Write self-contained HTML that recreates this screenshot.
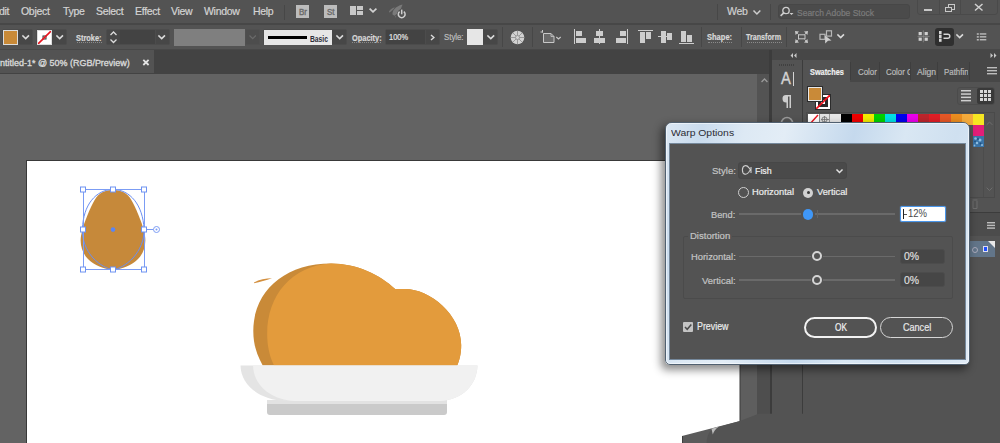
<!DOCTYPE html>
<html><head><meta charset="utf-8">
<style>
*{margin:0;padding:0;box-sizing:border-box}
html,body{width:1000px;height:443px;overflow:hidden;background:#535353;font-family:"Liberation Sans",sans-serif}
.a{position:absolute}
.t{position:absolute;white-space:pre;line-height:1;-webkit-text-stroke:0.2px currentColor}
.menu{color:#d4d4d4;font-size:10.5px;letter-spacing:-0.3px;top:6px}
.cb{color:#d6d6d6;font-size:9.5px;font-weight:700;letter-spacing:-0.4px}
.box{position:absolute;background:#474747;border:1px solid #4c4c4c;border-radius:2px}
.chev{position:absolute;width:6px;height:6px;border-right:1.5px solid #d8d8d8;border-bottom:1.5px solid #d8d8d8;transform:rotate(45deg)}
.dl{position:absolute;white-space:pre;line-height:1;font-size:10px;color:#c6c6c6;letter-spacing:-0.35px}
.dl2{position:absolute;white-space:pre;line-height:1;font-size:10px;color:#ececec;letter-spacing:-0.35px}
.sep{position:absolute;width:1px;background:#474747}
</style></head><body>
<!-- MENU BAR -->
<div class="a" style="left:0;top:0;width:1000px;height:23px;background:#535353"></div>
<div class="a" style="left:0;top:23px;width:1000px;height:2px;background:#474747"></div>
<div class="t menu" style="left:-1px">dit</div>
<div class="t menu" style="left:21px">Object</div>
<div class="t menu" style="left:63px">Type</div>
<div class="t menu" style="left:96px">Select</div>
<div class="t menu" style="left:135px">Effect</div>
<div class="t menu" style="left:171px">View</div>
<div class="t menu" style="left:204px">Window</div>
<div class="t menu" style="left:253px">Help</div>
<div class="sep" style="left:284px;top:5px;height:15px"></div>

<!-- Br St -->
<div class="a" style="left:296px;top:5px;width:13px;height:13px;background:#bcbcbc"></div>
<div class="t" style="left:298.6px;top:7.5px;font-size:9.2px;font-weight:400;color:#6a6a6a;-webkit-text-stroke:0.4px #6a6a6a;transform:scaleX(0.86);transform-origin:0 0">Br</div>
<div class="a" style="left:324px;top:5px;width:13px;height:13px;background:#bcbcbc"></div>
<div class="t" style="left:326.8px;top:7.5px;font-size:9.2px;font-weight:400;color:#6a6a6a;-webkit-text-stroke:0.4px #6a6a6a;transform:scaleX(0.86);transform-origin:0 0">St</div>
<!-- layout icon -->
<div class="a" style="left:350px;top:6px;width:6px;height:9px;background:#c8c8c8"></div>
<div class="a" style="left:357px;top:6px;width:6px;height:4px;background:#c8c8c8"></div>
<div class="a" style="left:357px;top:11px;width:6px;height:4px;background:#c8c8c8"></div>
<svg class="a" style="left:368px;top:7px" width="10" height="7" viewBox="0 0 10 7"><polyline points="2.2,2.2 5,4.8 7.8,2.2" fill="none" stroke="#d2d2d2" stroke-width="1.7" stroke-linecap="square"/></svg>
<!-- rocket/power icon -->
<svg class="a" style="left:385px;top:1px" width="25" height="20" viewBox="0 0 25 20">
<path d="M7.5 13.5 C7 10 10 5.5 17.5 3.5 C16 9 13 12.5 9.5 14.8 Z" fill="#7a7a7a"/>
<path d="M3.8 11 C5 8.5 7 6.8 9.8 6.2 C8.5 8.5 6.5 10.3 4.5 11.5 Z" fill="#767676"/>
<path d="M10.2 14.2 L11.3 15.8 L10.3 16.8 Z" fill="#707070"/>
<circle cx="16.7" cy="13.1" r="4.8" fill="#535353"/>
<path d="M14.6 10.6 A3.4 3.4 0 1 0 18.8 10.6" fill="none" stroke="#cfcfcf" stroke-width="1.5"/>
<line x1="16.7" y1="8.6" x2="16.7" y2="13.3" stroke="#cfcfcf" stroke-width="1.5"/>
</svg>
<!-- right menu -->
<div class="sep" style="left:717px;top:4px;height:16px"></div>
<div class="t menu" style="left:727px;color:#d0d0d0">Web</div>
<svg class="a" style="left:751.5px;top:8.5px" width="9.799999999999955" height="7.0" viewBox="0 0 9.799999999999955 7.0"><polyline points="2,2 4.899999999999977,5.0 7.7999999999999545,2" fill="none" stroke="#cdcdcd" stroke-width="1.5" stroke-linecap="square" stroke-linejoin="miter"/></svg>
<div class="sep" style="left:770px;top:4px;height:16px"></div>
<div class="a" style="left:778px;top:4px;width:132px;height:15px;background:#4b4b4b;border:1px solid #474747;border-radius:3px"></div>
<svg class="a" style="left:779px;top:5px" width="16" height="12" viewBox="0 0 16 12">
<circle cx="7" cy="5.5" r="3.2" fill="none" stroke="#cfcfcf" stroke-width="1.3"/>
<line x1="4.8" y1="7.8" x2="1.6" y2="10.8" stroke="#cfcfcf" stroke-width="1.6"/>
<path d="M10.5 8 L14.5 8 L12.5 10 Z" fill="#cfcfcf"/>
</svg>
<div class="t" id="search" style="left:797px;top:8.6px;font-size:9.08px;font-weight:400;color:#7c7c7c;transform:scaleX(0.935);transform-origin:0 0">Search Adobe Stock</div>
<div class="a" style="left:917px;top:-3px;width:81px;height:18px;border:1px solid #4a4a4a;border-radius:3px"></div>
<div class="a" style="left:939px;top:0;width:1px;height:14px;background:#4a4a4a"></div>
<div class="a" style="left:960px;top:0;width:1px;height:14px;background:#4a4a4a"></div>
<div class="a" style="left:924px;top:9px;width:8px;height:2px;background:#c8c8c8"></div>
<div class="a" style="left:947.5px;top:4px;width:7px;height:5.5px;border:1.3px solid #c8c8c8"></div>
<div class="a" style="left:945px;top:6.5px;width:6.5px;height:5.5px;border:1.3px solid #c8c8c8;background:#535353"></div>
<svg class="a" style="left:974px;top:3px" width="10" height="9" viewBox="0 0 10 9"><path d="M1 1 L8.5 7.5 M8.5 1 L1 7.5" stroke="#d0d0d0" stroke-width="1.5"/></svg>

<!-- CONTROL BAR -->
<div class="a" style="left:0;top:49px;width:1000px;height:1px;background:#484848"></div>
<div class="box" style="left:2px;top:29px;width:31px;height:16px"></div>
<div class="a" style="left:3px;top:30px;width:15px;height:15px;background:#c98a38;border:1px solid #dcdcdc"></div>
<svg class="a" style="left:20.8px;top:34.1px" width="9.399999999999999" height="6.600000000000001" viewBox="0 0 9.399999999999999 6.600000000000001"><polyline points="2,2 4.699999999999999,4.600000000000001 7.399999999999999,2" fill="none" stroke="#dadada" stroke-width="1.6" stroke-linecap="square" stroke-linejoin="miter"/></svg>
<div class="box" style="left:36px;top:29px;width:31px;height:16px"></div>
<div class="a" style="left:37px;top:30px;width:15px;height:15px;background:#fff;border:1px solid #dcdcdc;overflow:hidden">
 <svg width="15" height="15" style="position:absolute;left:-1px;top:-1px"><rect x="6" y="6" width="3" height="3" fill="none" stroke="#333" stroke-width="1"/><line x1="1" y1="14" x2="14" y2="1" stroke="#e8141e" stroke-width="1.6"/></svg>
</div>
<svg class="a" style="left:55.2px;top:34.1px" width="9.399999999999999" height="6.600000000000001" viewBox="0 0 9.399999999999999 6.600000000000001"><polyline points="2,2 4.699999999999999,4.600000000000001 7.399999999999999,2" fill="none" stroke="#dadada" stroke-width="1.6" stroke-linecap="square" stroke-linejoin="miter"/></svg>
<div class="t" id="stroke" style="left:76.3px;top:34.92px;font-size:8.24px;font-weight:700;color:#d8d8d8;transform:scaleX(0.901);transform-origin:0 0">Stroke:</div>
<div class="a" style="left:77px;top:42px;width:25px;border-top:1px dotted #8a8a8a"></div>
<div class="box" style="left:106px;top:29px;width:64px;height:16px"></div>
<div class="a" style="left:120px;top:30px;width:35px;height:14px;background:#434343"></div>
<div class="a" style="left:155px;top:30px;width:1px;height:14px;background:#4c4c4c"></div>
<svg class="a" style="left:109px;top:30px" width="9" height="15" viewBox="0 0 9 15"><path d="M1.5 5 L4.5 2 L7.5 5 M1.5 9.5 L4.5 12.5 L7.5 9.5" fill="none" stroke="#dcdcdc" stroke-width="1.3"/></svg>
<svg class="a" style="left:157.3px;top:33.9px" width="9.399999999999977" height="6.600000000000001" viewBox="0 0 9.399999999999977 6.600000000000001"><polyline points="2,2 4.699999999999989,4.600000000000001 7.399999999999977,2" fill="none" stroke="#dadada" stroke-width="1.6" stroke-linecap="square" stroke-linejoin="miter"/></svg>
<div class="a" style="left:174px;top:29px;width:71px;height:17px;background:#7f7f7f"></div>
<div class="box" style="left:245px;top:29px;width:15px;height:16px;background:#4d4d4d;border-color:#505050"></div>
<svg class="a" style="left:247.5px;top:33.9px" width="9.400000000000006" height="6.600000000000001" viewBox="0 0 9.400000000000006 6.600000000000001"><polyline points="2,2 4.700000000000003,4.600000000000001 7.400000000000006,2" fill="none" stroke="#6a6a6a" stroke-width="1.3" stroke-linecap="square" stroke-linejoin="miter"/></svg>
<div class="box" style="left:263px;top:29px;width:84px;height:16px"></div>
<div class="a" style="left:264px;top:30px;width:68px;height:15px;background:#e6e6e6"></div>
<div class="a" style="left:268px;top:36px;width:39px;height:3px;background:#000"></div>
<div class="t" id="basic" style="left:309.7px;top:34.77px;font-size:8.66px;font-weight:700;color:#2c2c38;-webkit-text-stroke:0;transform:scaleX(0.774);transform-origin:0 0">Basic</div>
<svg class="a" style="left:334.5px;top:34px" width="9.399999999999977" height="6.600000000000001" viewBox="0 0 9.399999999999977 6.600000000000001"><polyline points="2,2 4.699999999999989,4.600000000000001 7.399999999999977,2" fill="none" stroke="#dadada" stroke-width="1.6" stroke-linecap="square" stroke-linejoin="miter"/></svg>
<div class="t" id="opacity" style="left:352px;top:34.41px;font-size:8.38px;font-weight:700;color:#d8d8d8;transform:scaleX(0.885);transform-origin:0 0">Opacity:</div>
<div class="a" style="left:352px;top:42px;width:29px;border-top:1px dotted #8a8a8a"></div>
<div class="box" style="left:385px;top:29px;width:55px;height:16px"></div>
<div class="a" style="left:386px;top:30px;width:39px;height:14px;background:#434343"></div>
<div class="a" style="left:425px;top:30px;width:1px;height:14px;background:#4c4c4c"></div>
<div class="t" id="p100" style="left:388.5px;top:34.42px;font-size:8.24px;font-weight:400;color:#e4e4e4;transform:scaleX(0.902);transform-origin:0 0">100%</div>
<svg class="a" style="left:428.5px;top:32.8px" width="7" height="9" viewBox="0 0 7 9"><polyline points="2,2 4.9,4.5 2,7" fill="none" stroke="#dadada" stroke-width="1.4"/></svg>
<div class="t" id="style" style="left:443.9px;top:33.4px;font-size:8.38px;font-weight:400;color:#bdbdbd;transform:scaleX(0.933);transform-origin:0 0">Style:</div>
<div class="box" style="left:467px;top:29px;width:31px;height:16px"></div>
<div class="a" style="left:467px;top:29px;width:16px;height:16px;background:#e6e6e6"></div>
<svg class="a" style="left:485.7px;top:33.9px" width="9.600000000000023" height="6.600000000000001" viewBox="0 0 9.600000000000023 6.600000000000001"><polyline points="2,2 4.800000000000011,4.600000000000001 7.600000000000023,2" fill="none" stroke="#dadada" stroke-width="1.6" stroke-linecap="square" stroke-linejoin="miter"/></svg>
<div class="sep" style="left:502px;top:27px;height:20px"></div>
<svg class="a" style="left:510px;top:30px" width="15" height="15" viewBox="0 0 15 15">
<circle cx="7.5" cy="7.5" r="6.8" fill="#d2d2d2"/>
<g stroke="#8a8a8a" stroke-width="0.8" fill="none"><circle cx="7.5" cy="7.5" r="2"/><path d="M7.5 1 V5.5 M7.5 9.5 V14 M1 7.5 H5.5 M9.5 7.5 H14 M3 3 L6 6 M9 9 L12 12 M12 3 L9 6 M6 9 L3 12"/></g>
</svg>
<div class="sep" style="left:532px;top:27px;height:20px"></div>
<!-- artboard icon -->
<svg class="a" style="left:540px;top:29px" width="24" height="15" viewBox="0 0 24 15">
<path d="M3.5 4.5 H11 L14 7.5 V13.5 H3.5 Z" fill="#6a6a6a" stroke="#c8c8c8" stroke-width="1"/>
<path d="M11 4.5 V7.5 H14" fill="none" stroke="#c8c8c8" stroke-width="0.8"/>
<path d="M2.5 1 V3.5 M0.5 3 H3" stroke="#c8c8c8" stroke-width="1"/>
<polyline points="16.3,8 18.5,10 20.7,8" fill="none" stroke="#c8c8c8" stroke-width="1.2"/>
</svg>
<!-- align icons -->
<svg class="a" style="left:573px;top:29px" width="122" height="16" viewBox="0 0 122 16" shape-rendering="crispEdges">
<g fill="#cdcdcd">
<rect x="1" y="0" width="1" height="15"/><rect x="3" y="2" width="6" height="5"/><rect x="3" y="8.5" width="10" height="5"/>
<rect x="26" y="0" width="1" height="15"/><rect x="23" y="2" width="7" height="5"/><rect x="21" y="8.5" width="11" height="5"/>
<rect x="54" y="0" width="1" height="15"/><rect x="47" y="2" width="6" height="5"/><rect x="43" y="8.5" width="10" height="5"/>
<rect x="65" y="1" width="15" height="1"/><rect x="67" y="3" width="5" height="11"/><rect x="73" y="3" width="5" height="7"/>
<rect x="85" y="7" width="14" height="1"/><rect x="87.5" y="2" width="5" height="12"/><rect x="93.5" y="4" width="5" height="7"/>
<rect x="106" y="14" width="15" height="1"/><rect x="108" y="2" width="5" height="11"/><rect x="114" y="6" width="5" height="7"/>
</g></svg>
<div class="sep" style="left:701px;top:27px;height:20px"></div>
<div class="t" id="shape" style="left:707px;top:34.22px;font-size:8.24px;font-weight:700;color:#d8d8d8;transform:scaleX(0.913);transform-origin:0 0">Shape:</div>
<div class="a" style="left:708px;top:42px;width:24px;border-top:1px dotted #8a8a8a"></div>
<div class="sep" style="left:741px;top:27px;height:20px"></div>
<div class="t" id="transform" style="left:746.4px;top:34.22px;font-size:8.24px;font-weight:700;color:#d8d8d8;transform:scaleX(0.869);transform-origin:0 0">Transform</div>
<div class="a" style="left:747px;top:42px;width:35px;border-top:1px dotted #8a8a8a"></div>
<div class="sep" style="left:786px;top:27px;height:20px"></div>
<svg class="a" style="left:794px;top:30px" width="15" height="14" viewBox="0 0 15 14">
<rect x="4.5" y="4.8" width="6.5" height="4" fill="none" stroke="#c8c8c8" stroke-width="1"/>
<g fill="#c8c8c8"><path d="M1 1 L5 1.6 L1.6 5 Z"/><path d="M14 1 L10 1.6 L13.4 5 Z"/><path d="M1 13 L5 12.4 L1.6 9 Z"/><path d="M14 13 L10 12.4 L13.4 9 Z"/></g>
<path d="M3 3 L4.5 4.5 M12 3 L10.5 4.5 M3 11 L4.5 9.5 M12 11 L10.5 9.5" stroke="#c8c8c8" stroke-width="0.8"/>
</svg>
<svg class="a" style="left:818px;top:29px" width="18" height="16" viewBox="0 0 18 16">
<rect x="2" y="5.3" width="5" height="5" fill="none" stroke="#b8b8b8" stroke-width="1.2"/>
<rect x="8.5" y="1.8" width="5" height="5.3" fill="none" stroke="#b8b8b8" stroke-width="1.2"/>
<path d="M7 6.5 L13.5 11.5 L10 11.8 L7.2 14.5 Z" fill="#cdcdcd"/>
</svg>
<svg class="a" style="left:835.7px;top:33.3px" width="9.399999999999977" height="6.600000000000001" viewBox="0 0 9.399999999999977 6.600000000000001"><polyline points="2,2 4.699999999999989,4.600000000000001 7.399999999999977,2" fill="none" stroke="#dadada" stroke-width="1.6" stroke-linecap="square"/></svg>
<svg class="a" style="left:917px;top:30px" width="14" height="13" viewBox="917 30 14 13">
<path d="M917.6 36.4 H929.6 M923.3 30.4 V42.3" stroke="#8a8a8a" stroke-width="0.8"/>
<g fill="#d0d0d0"><rect x="918.6" y="32" width="3.2" height="3.2"/><rect x="924.6" y="32" width="3.2" height="3.2"/><rect x="918.6" y="37.6" width="3.2" height="3.2"/><rect x="924.6" y="37.6" width="3.2" height="3.2"/></g>
</svg>
<div class="a" style="left:935px;top:27.5px;width:19px;height:18.5px;background:#2f2f2f;border-radius:3px"></div>
<svg class="a" style="left:935px;top:27px" width="20" height="20" viewBox="935 27 20 20">
<g fill="#d6d6d6"><rect x="939" y="31" width="2.6" height="3.2"/><rect x="939" y="34.8" width="2.6" height="3.2"/><rect x="939" y="38.6" width="2.6" height="3.2"/></g>
<path d="M943.5 34.3 H947.8 A2 2 0 0 1 947.8 38.3 H943.5" fill="none" stroke="#d6d6d6" stroke-width="1.4"/>
</svg>
<svg class="a" style="left:954.5px;top:33.3px" width="9.4" height="6.6" viewBox="0 0 9.4 6.6"><polyline points="2,2 4.7,4.6 7.4,2" fill="none" stroke="#dadada" stroke-width="1.6" stroke-linecap="square"/></svg>
<svg class="a" style="left:976px;top:33px" width="11" height="8" viewBox="0 0 11 8">
<g fill="#c4c4c4"><rect x="0.8" y="0.3" width="2" height="1.4"/><rect x="0.8" y="3.2" width="2" height="1.4"/><rect x="0.8" y="6.1" width="2" height="1.4"/><rect x="3.8" y="0.3" width="6.5" height="1.3"/><rect x="3.8" y="3.2" width="6.5" height="1.3"/><rect x="3.8" y="6.1" width="6.5" height="1.3"/></g>
</svg>

<!-- TAB BAR -->
<div class="a" style="left:0;top:50px;width:770px;height:24px;background:#434343"></div>
<div class="a" style="left:0;top:50px;width:154px;height:23px;background:#535353"></div>
<div class="t" id="tab" style="left:0px;top:58.9px;font-size:8.8px;font-weight:400;color:#d8d8d8;-webkit-text-stroke:0.35px #d8d8d8;transform:scaleX(1.02);transform-origin:0 0">ntitled-1* @ 50% (RGB/Preview)</div>
<svg class="a" style="left:142px;top:59px" width="8" height="7" viewBox="0 0 8 7"><path d="M1.3 0.9 L6.6 6 M6.6 0.9 L1.3 6" stroke="#e4e4e4" stroke-width="1.8"/></svg>
<!-- CANVAS -->
<div class="a" style="left:0;top:74px;width:757px;height:369px;background:#636363"></div>
<div class="a" style="left:757px;top:74px;width:13px;height:369px;background:#535353"></div>
<svg class="a" style="left:759.5px;top:77px" width="9.0" height="6.5" viewBox="0 0 9.0 6.5"><polyline points="2,4.5 4.5,2 7.0,4.5" fill="none" stroke="#9a9a9a" stroke-width="1.3" stroke-linecap="square" stroke-linejoin="miter"/></svg>
<div class="a" style="left:26px;top:160px;width:714px;height:283px;background:#2e2e2e;opacity:.8"></div>
<div class="a" style="left:27px;top:161px;width:713px;height:282px;background:#fff"></div>
<!-- DOCK -->
<div class="a" style="left:769px;top:50px;width:3px;height:393px;background:#3c3c3c"></div>
<div class="a" style="left:772px;top:50px;width:228px;height:10px;background:#474747"></div>
<svg class="a" style="left:790px;top:53px" width="7" height="5" viewBox="0 0 7 5"><path d="M3 0 L0.5 2.5 L3 5 Z M6.5 0 L4 2.5 L6.5 5 Z" fill="#c8c8c8"/></svg>
<svg class="a" style="left:990px;top:53px" width="7" height="5" viewBox="0 0 7 5"><path d="M0.5 0 L3 2.5 L0.5 5 Z M4 0 L6.5 2.5 L4 5 Z" fill="#c8c8c8"/></svg>
<div class="a" style="left:772px;top:60px;width:30px;height:383px;background:#535353"></div>
<div class="a" style="left:779px;top:63.5px;width:15px;height:2px;background-image:repeating-linear-gradient(90deg,#404040 0 1.5px,transparent 1.5px 2px)"></div>
<div class="t" style="left:780.5px;top:71px;font-size:16px;color:#d4d4d4;font-weight:400;-webkit-text-stroke:0.4px #d4d4d4;transform:scaleX(0.92);transform-origin:0 0">A</div>
<div class="a" style="left:793px;top:72px;width:1px;height:14px;background:#d4d4d4"></div>
<svg class="a" style="left:781px;top:95px" width="11" height="14" viewBox="0 0 11 14"><path d="M5 0 H10 V13 H8.5 V1.5 H7 V13 H5.5 V7.5 A3.7 3.7 0 0 1 5 0 Z" fill="#cdcdcd"/></svg>
<svg class="a" style="left:779px;top:114px" width="16" height="9" viewBox="0 0 16 9"><path d="M2.5 9 A5.5 5.5 0 0 1 13.5 9" fill="none" stroke="#9a9a9a" stroke-width="1.6"/></svg>
<div class="a" style="left:802px;top:60px;width:1px;height:383px;background:#3c3c3c"></div>
<div class="a" style="left:803px;top:60px;width:197px;height:22px;background:#474747"></div>
<div class="a" style="left:803px;top:60px;width:47px;height:22px;background:#535353"></div>
<div class="t" id="swatches" style="left:810.4px;top:68.31px;font-size:8.38px;font-weight:700;color:#f0f0f0;transform:scaleX(0.874);transform-origin:0 0">Swatches</div>
<div class="a" style="left:879px;top:62px;width:1px;height:18px;background:#3e3e3e"></div>
<div class="a" style="left:850px;top:62px;width:1px;height:18px;background:#3e3e3e"></div>
<div class="a" style="left:910px;top:62px;width:1px;height:18px;background:#3e3e3e"></div>
<div class="a" style="left:937px;top:62px;width:1px;height:18px;background:#3e3e3e"></div>
<div class="a" style="left:969px;top:62px;width:1px;height:18px;background:#3e3e3e"></div>
<div class="t" id="color" style="left:858px;top:68.31px;font-size:8.38px;font-weight:400;color:#b9b9b9;transform:scaleX(0.941);transform-origin:0 0">Color</div>
<div class="a" style="left:886px;top:66px;width:24px;height:12px;overflow:hidden"><div class="t" style="left:0;top:2.4px;font-size:8.38px;color:#b9b9b9;transform:scaleX(0.94);transform-origin:0 0">Color Guide</div></div>
<div class="t" id="align" style="left:917px;top:68.31px;font-size:8.38px;font-weight:400;color:#b9b9b9;transform:scaleX(1.024);transform-origin:0 0">Align</div>
<div class="a" style="left:944px;top:66px;width:24px;height:12px;overflow:hidden"><div class="t" style="left:0;top:2.4px;font-size:8.38px;color:#b9b9b9;transform:scaleX(0.94);transform-origin:0 0">Pathfinder</div></div>
<svg class="a" style="left:987px;top:67px" width="10" height="8" viewBox="0 0 10 8"><g fill="#bdbdbd"><rect y="0" width="10" height="1.4"/><rect y="3" width="10" height="1.4"/><rect y="6" width="10" height="1.4"/></g></svg>
<div class="a" style="left:803px;top:82px;width:197px;height:361px;background:#535353"></div>
<!-- fill/stroke -->
<div class="a" style="left:815px;top:94px;width:16px;height:16px;background:#2c2c2c"></div>
<div class="a" style="left:816px;top:95px;width:14px;height:14px;background:#fff;overflow:hidden">
<svg width="14" height="14" style="position:absolute;left:0;top:0"><rect x="3.5" y="3.5" width="7" height="7" fill="none" stroke="#2a2a2a" stroke-width="3"/><line x1="0" y1="14" x2="14" y2="0" stroke="#f0141e" stroke-width="1.8"/></svg></div>
<div class="a" style="left:807px;top:86px;width:16px;height:16px;background:#2c2c2c"></div>
<div class="a" style="left:808px;top:87px;width:14px;height:14px;background:#c98a38;border:1px solid #e8e8e8"></div>
<!-- view buttons -->
<div class="a" style="left:957px;top:87px;width:38px;height:18px;border:1px solid #4b4b4b;border-radius:3px"></div>
<div class="a" style="left:977px;top:88px;width:17px;height:16px;background:#393939;border-radius:2px"></div>
<svg class="a" style="left:961px;top:90px" width="10" height="12" viewBox="0 0 10 12"><g fill="#cfcfcf"><rect y="0" width="10" height="1.5"/><rect y="3.3" width="10" height="1.5"/><rect y="6.6" width="10" height="1.5"/><rect y="9.9" width="10" height="1.5"/></g></svg>
<svg class="a" style="left:980px;top:90px" width="11" height="11" viewBox="0 0 11 11"><g fill="#d6d6d6"><rect x="0" y="0" width="3" height="3"/><rect x="4" y="0" width="3" height="3"/><rect x="8" y="0" width="3" height="3"/><rect x="0" y="4" width="3" height="3"/><rect x="4" y="4" width="3" height="3"/><rect x="8" y="4" width="3" height="3"/><rect x="0" y="8" width="3" height="3"/><rect x="4" y="8" width="3" height="3"/><rect x="8" y="8" width="3" height="3"/></g></svg>
<!-- swatch list box -->
<div class="a" style="left:806px;top:112px;width:189px;height:86px;border:1px solid #4a4a4a"></div>
<div class="a" style="left:983px;top:113px;width:1px;height:84px;background:#4c4c4c"></div>
<svg class="a" style="left:984.5px;top:120px" width="9.0" height="6.5" viewBox="0 0 9.0 6.5"><polyline points="2,4.5 4.5,2 7.0,4.5" fill="none" stroke="#6e6e6e" stroke-width="1" stroke-linecap="square" stroke-linejoin="miter"/></svg>
<svg class="a" style="left:984.5px;top:186px" width="9.0" height="6.5" viewBox="0 0 9.0 6.5"><polyline points="2,2 4.5,4.5 7.0,2" fill="none" stroke="#6e6e6e" stroke-width="1" stroke-linecap="square" stroke-linejoin="miter"/></svg>
<svg class="a" style="left:808px;top:114px" width="176" height="34" viewBox="0 0 176 34" shape-rendering="crispEdges">
<rect x="0" y="0" width="11" height="11" fill="#fff"/><line x1="1" y1="11" x2="10" y2="1" stroke="#e8141e" stroke-width="1.4" shape-rendering="auto"/>
<rect x="11" y="0" width="11" height="11" fill="#e2e2e2"/><circle cx="16.5" cy="5.5" r="2.6" fill="none" stroke="#6a6a6a" stroke-width="0.8" shape-rendering="auto"/><path d="M12.5 5.5 H20.5 M16.5 1.5 V9.5" stroke="#6a6a6a" stroke-width="0.7"/><rect x="11" y="0" width="0.6" height="11" fill="#8a8a8a"/><rect x="21.4" y="0" width="0.6" height="11" fill="#9a9a9a"/>
<rect x="22" y="0" width="11" height="11" fill="#e9e9e9"/><rect x="22" y="8" width="11" height="3" fill="#d8d8d8"/>
<rect x="33" y="0" width="11" height="11" fill="#000"/>
<rect x="44" y="0" width="11" height="11" fill="#f00000"/>
<rect x="55" y="0" width="11" height="11" fill="#f2ec00"/>
<rect x="66" y="0" width="11" height="11" fill="#00d200"/>
<rect x="77" y="0" width="11" height="11" fill="#00dfe6"/>
<rect x="88" y="0" width="11" height="11" fill="#0000ee"/>
<rect x="99" y="0" width="11" height="11" fill="#ea00ea"/>
<rect x="110" y="0" width="11" height="11" fill="#bd252c"/>
<rect x="121" y="0" width="11" height="11" fill="#e01e26"/>
<rect x="132" y="0" width="11" height="11" fill="#e65726"/>
<rect x="143" y="0" width="11" height="11" fill="#ec8d1f"/>
<rect x="154" y="0" width="11" height="11" fill="#f4aa3b"/>
<rect x="165" y="0" width="11" height="11" fill="#f6e622"/>
<rect x="165" y="11" width="11" height="11" fill="#e21e78"/>
<rect x="165" y="22" width="11" height="11" fill="#3a74a8"/>
<g fill="#8fbde0" shape-rendering="auto"><circle cx="167.5" cy="24.5" r="1.3"/><circle cx="172" cy="26" r="1.5"/><circle cx="169" cy="29" r="1.2"/><circle cx="174" cy="31" r="1.1"/><circle cx="166.5" cy="31.5" r="0.9"/></g><g fill="#1f4f80" shape-rendering="auto"><circle cx="170" cy="25" r="0.9"/><circle cx="172.5" cy="29.5" r="1"/><circle cx="167" cy="27.5" r="0.8"/></g>
</svg>
<svg class="a" style="left:972px;top:199px" width="6" height="10" viewBox="0 0 6 10"><path d="M0.5 1 H5.5 M1 2 V9.5 H5 V2" fill="none" stroke="#6e6e6e" stroke-width="1"/></svg>
<div class="a" style="left:803px;top:212px;width:197px;height:1px;background:#3c3c3c"></div>
<div class="a" style="left:803px;top:213px;width:197px;height:23px;background:#4c4c4c"></div>
<svg class="a" style="left:987px;top:222px" width="8" height="7" viewBox="0 0 8 7"><g fill="#bdbdbd"><rect y="0" width="8" height="1.4"/><rect y="2.7" width="8" height="1.4"/><rect y="5.4" width="8" height="1.4"/></g></svg>
<div class="a" style="left:803px;top:241px;width:192px;height:16px;background:#627589"></div>
<svg class="a" style="left:988px;top:241px" width="7" height="7" viewBox="0 0 7 7"><path d="M0 0 H7 V7 Z" fill="#e8e8e8"/></svg>
<div class="a" style="left:972px;top:247px;width:6px;height:6px;border:1px solid #aab;border-radius:50%"></div>
<div class="a" style="left:983px;top:246px;width:5px;height:6px;background:#2050ff;border:1px solid #dde"></div>

<!-- ARTWORK -->
<svg class="a" style="left:0;top:0" width="1000" height="443" viewBox="0 0 1000 443">
<!-- egg -->
<path d="M113 190 C124 190 129 195 133 203 C138 213 143 225 145 236 C146.5 246 143 254 138 259 C132 265 122 269.6 113 269.6 C104 269.6 94 265 88 259 C83 254 79.5 246 81 236 C83 225 88 213 93 203 C97 195 102 190 113 190 Z" fill="#c6893a"/>
<path d="M113 189.5 C130 189.5 143 205 144 229 C144.5 240 140 250 133 258 C126 265 119 269 113 269.5 C107 269 100 265 93 258 C86 250 82 240 82.5 229 C83 205 96 189.5 113 189.5 Z" fill="none" stroke="#6b8ef0" stroke-width="1"/>
<rect x="83.5" y="189.5" width="61" height="80" fill="none" stroke="#7b9cf4" stroke-width="1"/>
<line x1="144.5" y1="229.5" x2="153.5" y2="229.5" stroke="#7b9cf4" stroke-width="1"/>
<circle cx="156.5" cy="229.5" r="3" fill="#fff" stroke="#7b9cf4" stroke-width="1"/>
<circle cx="156.5" cy="229.5" r="1" fill="#7b9cf4"/>
<g fill="#fff" stroke="#6f93f2" stroke-width="1">
<rect x="80.5" y="187" width="5" height="5"/><rect x="110.5" y="187" width="5" height="5"/><rect x="141.5" y="187" width="5" height="5"/>
<rect x="80.5" y="227" width="5" height="5"/><rect x="141.5" y="227" width="5" height="5"/>
<rect x="80.5" y="267" width="5" height="5"/><rect x="110.5" y="267" width="5" height="5"/><rect x="141.5" y="267" width="5" height="5"/>
</g>
<circle cx="113" cy="229.6" r="2.3" fill="#5b86f2"/>
<!-- bun -->
<path d="M262.7 365.5 C257 355 253.3 345 253.3 331 C253.3 291 285 263.6 331 263.6 C357 263.6 380 275 395.2 289.1 L405 289 C430.2 289 461.2 315 461.2 345 C461.2 354 459.5 360 457.2 365.5 Z" fill="#c98a38"/>
<path d="M274 365.5 C269 355 267.2 345 267.2 333.8 C267.2 295 292 266 331 263.6 C357 263.6 380 275 395.2 289.1 L405 289 C430.2 289 461.2 315 461.2 345 C461.2 354 459.5 360 457.2 365.5 Z" fill="#e39b3c"/>
<path d="M254 282.5 C259 279.5 266 278.3 272 278.3 C266 280.5 260 282 254 283.2 Z" fill="#d38f3e"/>
<!-- bowl -->
<path d="M267 401 H447 V412 Q447 415 444 415 H270 Q267 415 267 412 Z" fill="#cacaca"/>
<rect x="267" y="400" width="180" height="4" fill="#e2e2e2"/>
<path d="M240.5 365.5 H477.5 C477 385 462 400 440 401 H285 C262 400 241 387 240.5 365.5 Z" fill="#e4e4e4"/>
<path d="M253 365.5 H477.5 C477 385 462 400 440 401 H295 C272 400 254 387 253 365.5 Z" fill="#f1f1f1"/>
</svg>
<!-- bottom glitch -->
<svg class="a" style="left:0;top:0" width="1000" height="443" viewBox="0 0 1000 443">
<rect x="740" y="360" width="17" height="83" fill="#5e5e5e"/>
<rect x="739.5" y="360" width="1" height="62" fill="#3a3a3a"/>
<rect x="757" y="360" width="13" height="83" fill="#4e4e4e"/>
<polygon points="682,443 682,436 711,428.6 740,421 740,443" fill="#5b5b5b"/>
<rect x="682" y="436" width="1" height="7" fill="#3e3e3e"/>
<path d="M706.5 443 C707 436 709 431 713 428.4 L740 421 L758.6 413.8 L774 413.8 L1000 413.8 V443 Z" fill="#535353"/>
<path d="M711.5 428.8 L719 426.6 C715.5 428.8 713.8 431.5 712.8 434.5 Z" fill="#bdbdbd"/>
</svg>
<!-- DIALOG -->
<div class="a" style="left:665px;top:122px;width:305px;height:243px;border-radius:7px 7px 5px 5px;background:linear-gradient(105deg,#dbe7f3 0%,#cadcee 10%,#dde9f4 22%,#e3edf6 33%,#c5d9ed 52%,#d9e7f3 66%,#cfe0f0 80%,#dfeaf5 100%);border:1px solid #506070;box-shadow:-3px 4px 9px 1px rgba(0,0,0,0.45)"></div>
<div class="a" style="left:666px;top:123px;width:303px;height:241px;border-radius:5px 5px 4px 4px;border:1px solid rgba(255,255,255,0.55)"></div>
<div class="a" style="left:669px;top:143px;width:297px;height:217px;background:#535353;border:1px solid #75889b"></div>
<div class="t" id="warp" style="left:670.8px;top:128.22px;font-size:9.78px;font-weight:400;color:#2c2c34;-webkit-text-stroke:0;transform:scaleX(1.063);transform-origin:0 0">Warp Options</div>
<div class="t" id="dstyle" style="left:711.8px;top:165.96px;font-size:9.5px;font-weight:400;color:#c4c4c4;transform:scaleX(1.005);transform-origin:0 0">Style:</div>
<div class="a" style="left:738px;top:162px;width:109px;height:17px;background:#4a4a4a;border:1px solid #474747;border-radius:3px"></div>
<svg class="a" style="left:738px;top:162px" width="16" height="16" viewBox="738 162 16 16"><path d="M748.8 167.6 C746.8 164.6 742.4 164.8 742.4 169.9 C742.4 175 746.8 175.2 748.8 172.3 C749.3 171.3 749.8 170.5 750.6 169.9 M748.8 167.6 C749.3 168.6 749.8 169.4 750.6 169.9 M751 167 V173" fill="none" stroke="#cfcfcf" stroke-width="1.1"/></svg>
<div class="t" id="fish" style="left:755.4px;top:165.96px;font-size:9.5px;font-weight:400;color:#f2f2f2;transform:scaleX(0.93);transform-origin:0 0">Fish</div>
<svg class="a" style="left:835.1px;top:167.6px" width="9.0" height="6.5" viewBox="0 0 9.0 6.5"><polyline points="2,2 4.5,4.5 7.0,2" fill="none" stroke="#e0e0e0" stroke-width="1.5" stroke-linecap="square" stroke-linejoin="miter"/></svg>
<div class="a" style="left:738px;top:187px;width:11px;height:11px;border:1.3px solid #cfcfcf;border-radius:50%"></div>
<div class="t" id="horiz" style="left:752.1px;top:187.8px;font-size:9.22px;font-weight:400;color:#ececec;transform:scaleX(1.012);transform-origin:0 0">Horizontal</div>
<div class="a" style="left:803px;top:187.5px;width:10px;height:10px;background:#d2d2d2;border-radius:50%"></div>
<div class="a" style="left:806.5px;top:191px;width:3px;height:3px;background:#3a3a3a;border-radius:50%"></div>
<div class="t" id="vert" style="left:816.6px;top:187.8px;font-size:9.22px;font-weight:400;color:#ececec;transform:scaleX(1.005);transform-origin:0 0">Vertical</div>
<div class="t" id="bend" style="left:711.4px;top:209.74px;font-size:9.64px;font-weight:400;color:#c4c4c4;transform:scaleX(0.964);transform-origin:0 0">Bend:</div>
<div class="a" style="left:739px;top:213.4px;width:62px;height:1.5px;background:#6a6a6a"></div><div class="a" style="left:814.5px;top:213.4px;width:80.5px;height:1.5px;background:#6a6a6a"></div>
<div class="a" style="left:816.5px;top:210px;width:1px;height:8px;background:#636363"></div>
<div class="a" style="left:802.5px;top:209px;width:10.5px;height:10.5px;background:#3f97f7;border-radius:50%"></div>
<div class="a" style="left:899.5px;top:206px;width:46px;height:16px;background:#fff;border:1.3px solid #4a96ea;border-radius:2px;box-shadow:0 0 1px #6aaaf0"></div>
<div class="a" style="left:903px;top:209px;width:1px;height:10px;background:#222"></div>
<div class="a" style="left:903.5px;top:214px;width:3px;height:1px;background:#555"></div><div class="t" style="left:907.5px;top:209.05px;font-size:10.34px;color:#4a4a4a;-webkit-text-stroke:0;transform:scaleX(0.922);transform-origin:0 0">12%</div>
<div class="a" style="left:683px;top:236px;width:270px;height:63px;border:1px solid #4b4b4b;border-radius:2px"></div>
<div class="a" style="left:688px;top:232px;width:44px;height:8px;background:#535353"></div>
<div class="t" id="distortion" style="left:690.2px;top:231.04px;font-size:9.64px;font-weight:400;color:#c4c4c4;transform:scaleX(0.988);transform-origin:0 0">Distortion</div>
<div class="t" id="horiz2" style="left:690.9px;top:251.94px;font-size:9.64px;font-weight:400;color:#c4c4c4;transform:scaleX(0.973);transform-origin:0 0">Horizontal:</div>
<div class="a" style="left:739px;top:255.6px;width:72px;height:1.5px;background:#6a6a6a"></div><div class="a" style="left:823px;top:255.6px;width:72px;height:1.5px;background:#6a6a6a"></div>
<div class="a" style="left:812.2px;top:251.3px;width:10px;height:10px;background:#535353;border:2px solid #d4d4d4;border-radius:50%"></div>
<div class="a" style="left:900px;top:249px;width:45px;height:15px;background:#464646;border:1px solid #4c4c4c;border-radius:3px"></div>
<div class="t" style="left:903.7px;top:252.3px;font-size:10.2px;color:#dedede;transform:scaleX(1.023);transform-origin:0 0">0%</div>
<div class="t" id="vert2" style="left:702.2px;top:275.52px;font-size:9.78px;font-weight:400;color:#c4c4c4;transform:scaleX(0.97);transform-origin:0 0">Vertical:</div>
<div class="a" style="left:739px;top:279.2px;width:72px;height:1.5px;background:#6a6a6a"></div><div class="a" style="left:823px;top:279.2px;width:72px;height:1.5px;background:#6a6a6a"></div>
<div class="a" style="left:812.2px;top:274.9px;width:10px;height:10px;background:#535353;border:2px solid #d4d4d4;border-radius:50%"></div>
<div class="a" style="left:900px;top:272px;width:45px;height:15px;background:#464646;border:1px solid #4c4c4c;border-radius:3px"></div>
<div class="t" style="left:903.7px;top:275.5px;font-size:10.2px;color:#dedede;transform:scaleX(1.023);transform-origin:0 0">0%</div>
<div class="a" style="left:683px;top:322px;width:10px;height:10px;background:#c4c4c4;border-radius:1px"></div>
<svg class="a" style="left:683px;top:322px" width="10" height="10" viewBox="0 0 10 10"><path d="M2 5 L4.2 7.3 L8.3 2.6" fill="none" stroke="#4a4a4a" stroke-width="1.5"/></svg>
<div class="t" id="preview" style="left:696.5px;top:321.79px;font-size:10.06px;font-weight:400;color:#ececec;transform:scaleX(0.88);transform-origin:0 0">Preview</div>
<div class="a" style="left:804px;top:317px;width:73px;height:21px;border:2px solid #f2f2f2;border-radius:11px"></div>
<div class="t" id="ok" style="left:834.7px;top:322.69px;font-size:10.06px;font-weight:400;color:#f2f2f2;transform:scaleX(0.824);transform-origin:0 0">OK</div>
<div class="a" style="left:880px;top:317px;width:73px;height:21px;border:1.5px solid #d6d6d6;border-radius:11px"></div>
<div class="t" id="cancel" style="left:903px;top:322.69px;font-size:10.06px;font-weight:400;color:#e8e8e8;transform:scaleX(0.902);transform-origin:0 0">Cancel</div>
</body></html>
